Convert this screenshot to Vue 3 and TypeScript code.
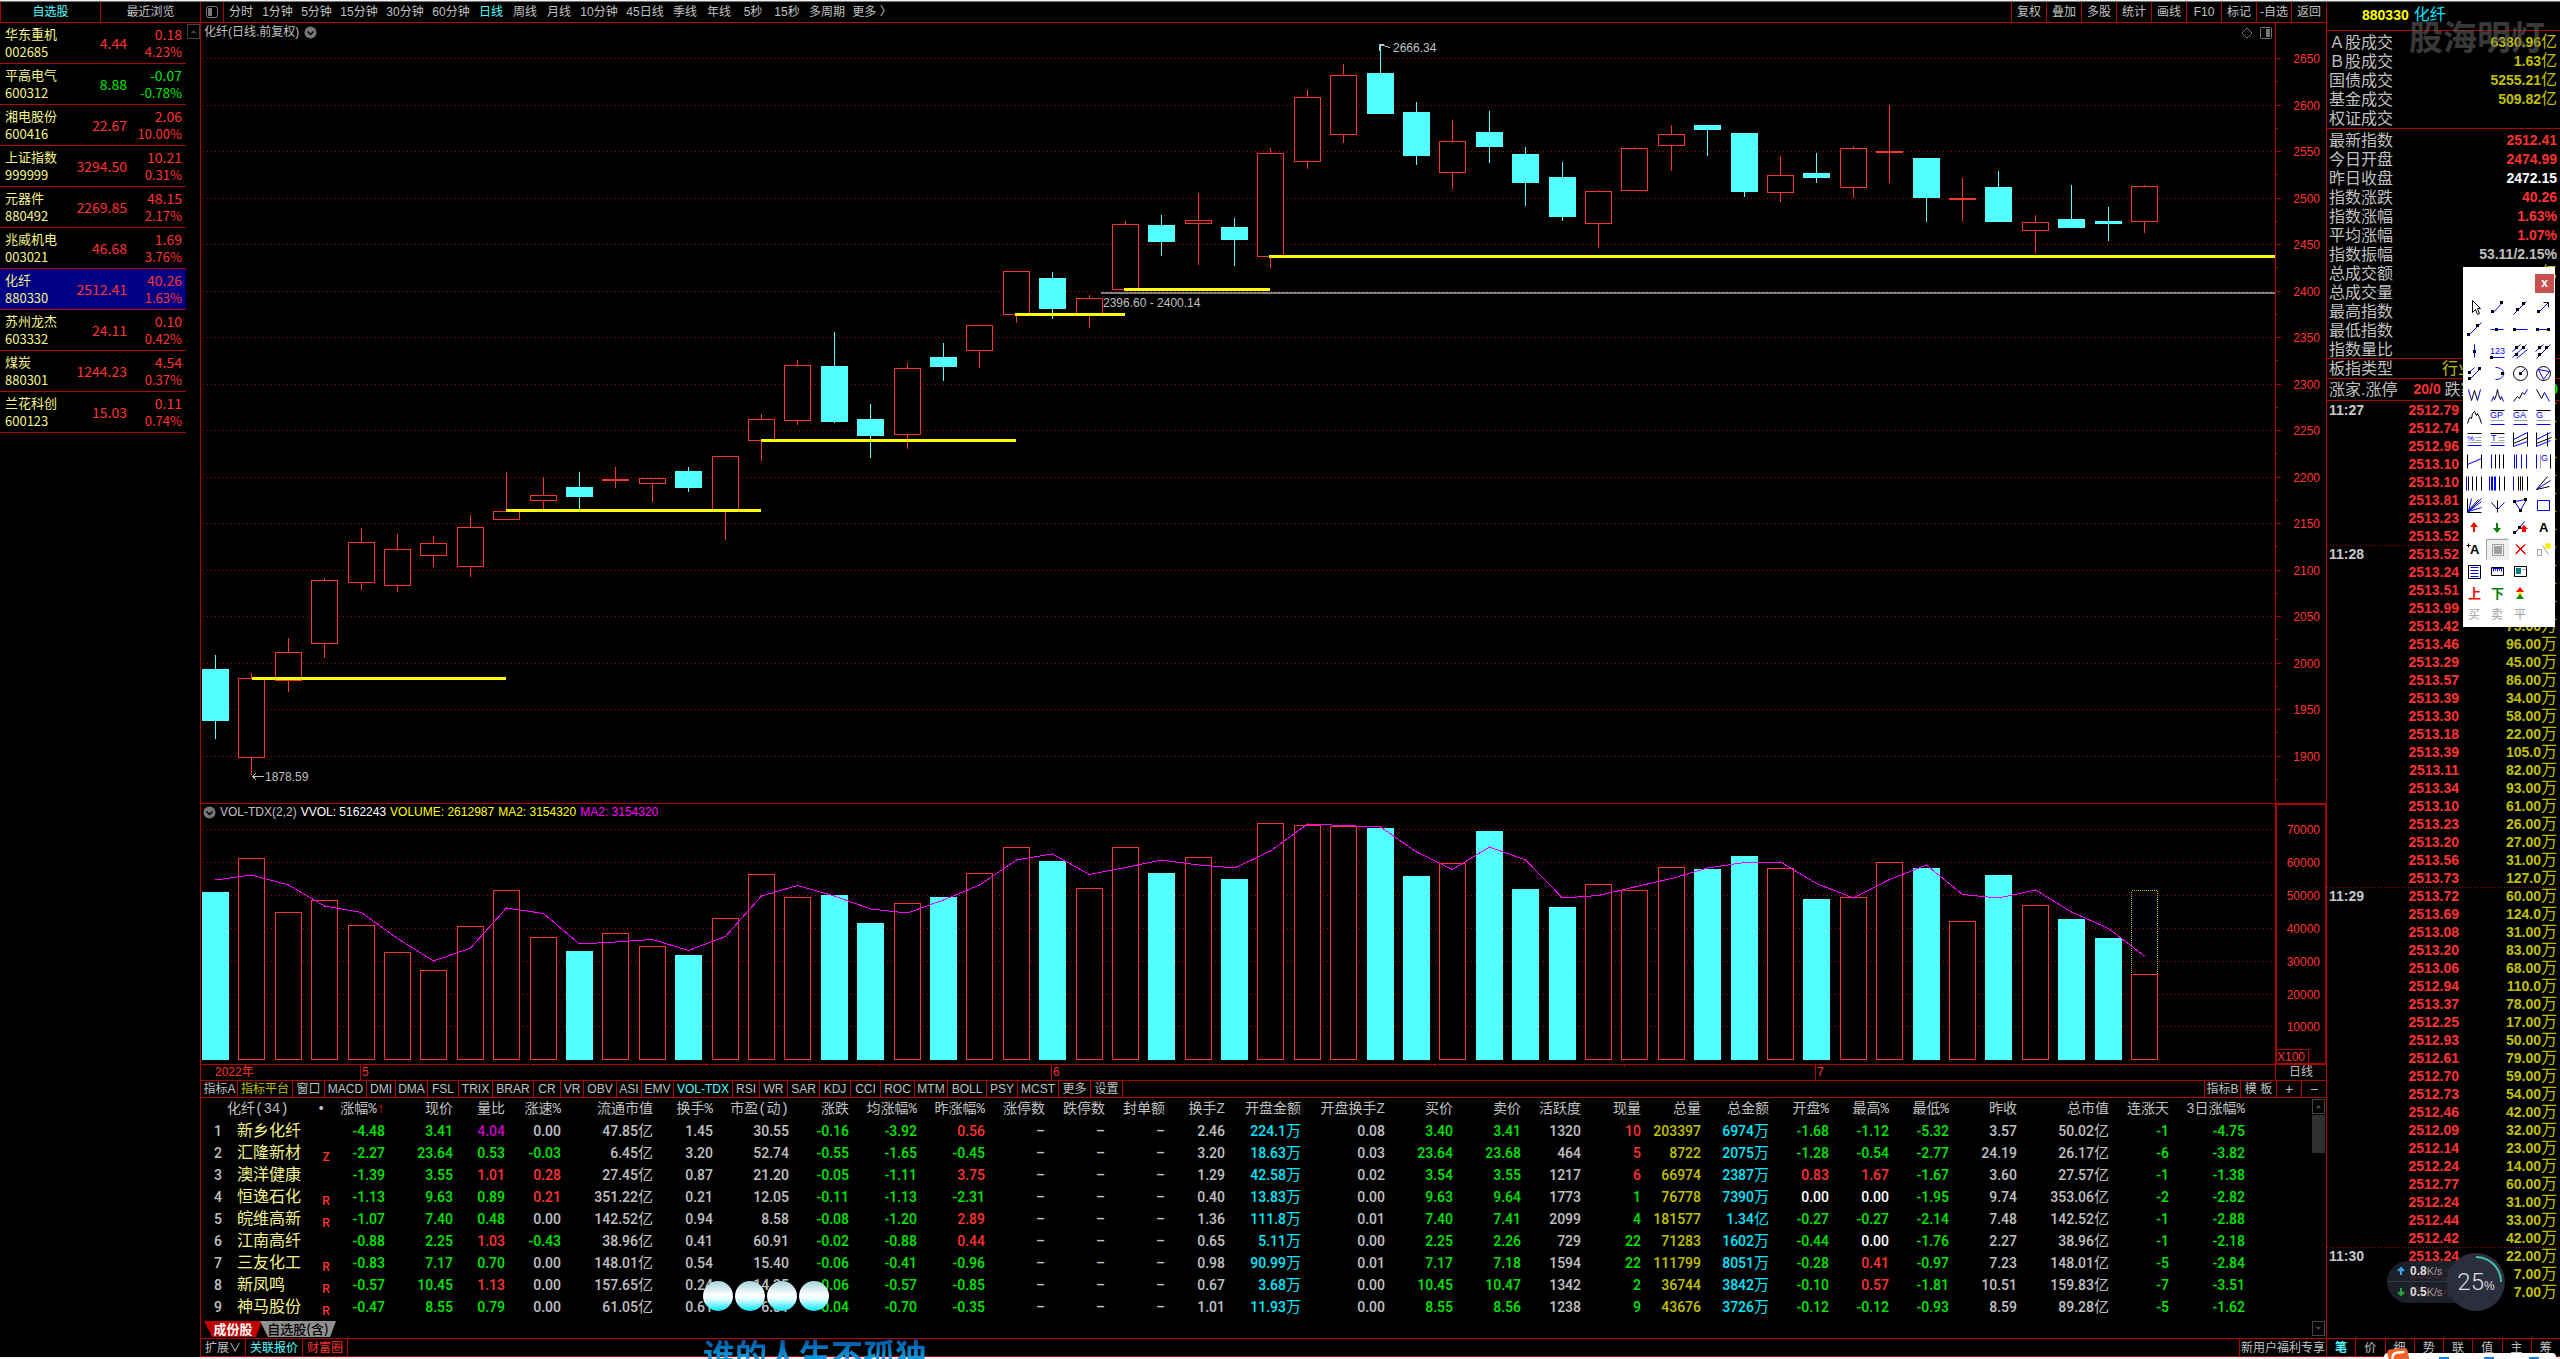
<script setup lang="ts">
type Watch = [name: string, code: string, price: string, diff: string, pct: string]
const watchlist: Watch[] = [
  ['华东重机', '002685', '4.44', '0.18', '4.23%'],
  ['平高电气', '600312', '8.88', '-0.07', '-0.78%'],
  ['湘电股份', '600416', '22.67', '2.06', '10.00%'],
  ['上证指数', '999999', '3294.50', '10.21', '0.31%'],
  ['元器件', '880492', '2269.85', '48.15', '2.17%'],
  ['兆威机电', '003021', '46.68', '1.69', '3.76%'],
  ['化纤', '880330', '2512.41', '40.26', '1.63%'],
  ['苏州龙杰', '603332', '24.11', '0.10', '0.42%'],
  ['煤炭', '880301', '1244.23', '4.54', '0.37%'],
  ['兰花科创', '600123', '15.03', '0.11', '0.74%'],
]

const periods: [string, number][] = [
  ['分时', 34], ['1分钟', 39], ['5分钟', 39], ['15分钟', 46], ['30分钟', 46], ['60分钟', 46],
  ['日线', 34], ['周线', 34], ['月线', 34], ['10分钟', 46], ['45日线', 46], ['季线', 34],
  ['年线', 34], ['5秒', 34], ['15秒', 34], ['多周期', 46], ['更多 〉', 44],
]
const actions = ['复权', '叠加', '多股', '统计', '画线', 'F10', '标记', '-自选', '返回']

const indicators: [string, number][] = [
  ['指标A', 36], ['指标平台', 55], ['窗口', 32], ['MACD', 42], ['DMI', 29], ['DMA', 32], ['FSL', 31],
  ['TRIX', 34], ['BRAR', 41], ['CR', 27], ['VR', 23], ['OBV', 33], ['ASI', 25], ['EMV', 32],
  ['VOL-TDX', 59], ['RSI', 27], ['WR', 28], ['SAR', 32], ['KDJ', 31], ['CCI', 30], ['ROC', 34],
  ['MTM', 33], ['BOLL', 39], ['PSY', 31], ['MCST', 41], ['更多', 32], ['设置', 32],
]

// Each candle: falling flag, body top, body bottom, high, low, volume top
type Candle = [number, number, number, number, number, number]
const candles: Candle[] = [
  [1, 669, 721, 655, 739, 892], [0, 678, 757, 673, 775, 858], [0, 652, 680, 638, 692, 912],
  [0, 580, 643, 578, 658, 900], [0, 542, 582, 528, 590, 925], [0, 549, 585, 534, 592, 952],
  [0, 543, 555, 536, 567, 970], [0, 527, 566, 515, 577, 926], [0, 511, 519, 472, 519, 890],
  [0, 495, 500, 477, 509, 937], [1, 487, 497, 472, 509, 951], [0, 479, 480, 467, 488, 933],
  [0, 478, 483, 478, 502, 946], [1, 471, 488, 467, 492, 955], [0, 456, 510, 456, 540, 918],
  [0, 419, 440, 414, 461, 874], [0, 365, 420, 360, 425, 897], [1, 366, 422, 332, 423, 895],
  [1, 419, 436, 404, 458, 923], [0, 368, 434, 363, 449, 903], [1, 357, 367, 343, 381, 897],
  [0, 325, 350, 325, 368, 873], [0, 271, 314, 271, 323, 847], [1, 278, 309, 272, 319, 861],
  [0, 298, 314, 295, 328, 888], [0, 224, 289, 221, 289, 847], [1, 225, 242, 215, 256, 873],
  [0, 220, 223, 193, 265, 857], [1, 227, 240, 218, 266, 879], [0, 153, 256, 148, 268, 823],
  [0, 97, 161, 90, 169, 825], [0, 75, 134, 64, 143, 826], [1, 73, 114, 44, 114, 828],
  [1, 112, 156, 102, 165, 876], [0, 141, 172, 120, 189, 863], [1, 132, 147, 111, 163, 831],
  [1, 154, 183, 147, 206, 889], [1, 177, 217, 162, 221, 907], [0, 191, 223, 190, 248, 884],
  [0, 148, 190, 147, 190, 890], [0, 134, 145, 125, 171, 867], [1, 125, 130, 125, 156, 869],
  [1, 133, 192, 133, 197, 856], [0, 175, 192, 156, 202, 868], [1, 173, 178, 153, 183, 899],
  [0, 148, 187, 146, 198, 897], [0, 151, 152, 105, 183, 862], [1, 158, 198, 158, 222, 868],
  [0, 198, 199, 178, 221, 921], [1, 187, 222, 171, 222, 875], [0, 222, 230, 215, 253, 905],
  [1, 219, 228, 185, 228, 919], [1, 221, 224, 207, 241, 938], [0, 186, 221, 185, 233, 974],
]
const cx = (i: number) => Math.round(215 + i * 36.396)
const X0 = 201
const PLOT_W = 2074
const leftPct = (x: number) => ({ left: ((x - X0) / PLOT_W) * 100 + '%' })
const VOL_BASE = 1060
const maPoints = candles
  .map((c, i) => {
    const prev = i ? candles[i - 1][5] : 868
    return `${cx(i) + 0.5},${(c[5] + prev) / 2}`
  })
  .join(' ')

const priceTicks = Array.from({ length: 16 }, (_, i) => ({ v: 2650 - i * 50, y: Math.round(58 + i * 46.5) }))
const volTicks = Array.from({ length: 7 }, (_, i) => ({ v: 70000 - i * 10000, y: Math.round(829 + i * 32.9) }))
const supports = [
  [252, 506, 678], [506, 761, 510], [761, 1016, 440], [1015, 1125, 314], [1124, 1270, 289], [1269, 2275, 256],
]
const months: [string, number][] = [['5', 360], ['6', 1051], ['7', 1815]]
const weekTicks = [533, 706, 878, 1242, 1434, 1624]

type Kind = 'idx' | 'down' | 'ratio' | 'speed' | 'plain' | 'sign' | 'amt' | 'vol' | 'lot'
const columns: { t: string; w: number; k: Kind }[] = [
  { t: '现价', w: 68, k: 'down' }, { t: '量比', w: 52, k: 'ratio' }, { t: '涨速%', w: 56, k: 'speed' },
  { t: '流通市值', w: 92, k: 'plain' }, { t: '换手%', w: 60, k: 'plain' }, { t: '市盈(动)', w: 76, k: 'plain' },
  { t: '涨跌', w: 60, k: 'sign' }, { t: '均涨幅%', w: 68, k: 'sign' }, { t: '昨涨幅%', w: 68, k: 'sign' },
  { t: '涨停数', w: 60, k: 'plain' }, { t: '跌停数', w: 60, k: 'plain' }, { t: '封单额', w: 60, k: 'plain' },
  { t: '换手Z', w: 60, k: 'plain' }, { t: '开盘金额', w: 76, k: 'amt' }, { t: '开盘换手Z', w: 84, k: 'plain' },
  { t: '买价', w: 68, k: 'down' }, { t: '卖价', w: 68, k: 'down' }, { t: '活跃度', w: 60, k: 'plain' },
  { t: '现量', w: 60, k: 'lot' }, { t: '总量', w: 60, k: 'vol' }, { t: '总金额', w: 68, k: 'amt' },
  { t: '开盘%', w: 60, k: 'sign' }, { t: '最高%', w: 60, k: 'sign' }, { t: '最低%', w: 60, k: 'sign' },
  { t: '昨收', w: 68, k: 'plain' }, { t: '总市值', w: 92, k: 'plain' }, { t: '连涨天', w: 60, k: 'sign' },
  { t: '3日涨幅%', w: 76, k: 'sign' },
]
const stocks: [string, string, string, string][] = [
  ['新乡化纤', '', '-4.48', '3.41 4.04 0.00 47.85亿 1.45 30.55 -0.16 -3.92 0.56 – – – 2.46 224.1万 0.08 3.40 3.41 1320 10 203397 6974万 -1.68 -1.12 -5.32 3.57 50.02亿 -1 -4.75'],
  ['汇隆新材', 'Z', '-2.27', '23.64 0.53 -0.03 6.45亿 3.20 52.74 -0.55 -1.65 -0.45 – – – 3.20 18.63万 0.03 23.64 23.68 464 5 8722 2075万 -1.28 -0.54 -2.77 24.19 26.17亿 -6 -3.82'],
  ['澳洋健康', '', '-1.39', '3.55 1.01 0.28 27.45亿 0.87 21.20 -0.05 -1.11 3.75 – – – 1.29 42.58万 0.02 3.54 3.55 1217 6 66974 2387万 0.83 1.67 -1.67 3.60 27.57亿 -1 -1.38'],
  ['恒逸石化', 'R', '-1.13', '9.63 0.89 0.21 351.22亿 0.21 12.05 -0.11 -1.13 -2.31 – – – 0.40 13.83万 0.00 9.63 9.64 1773 1 76778 7390万 0.00 0.00 -1.95 9.74 353.06亿 -2 -2.82'],
  ['皖维高新', 'R', '-1.07', '7.40 0.48 0.00 142.52亿 0.94 8.58 -0.08 -1.20 2.89 – – – 1.36 111.8万 0.01 7.40 7.41 2099 4 181577 1.34亿 -0.27 -0.27 -2.14 7.48 142.52亿 -1 -2.88'],
  ['江南高纤', '', '-0.88', '2.25 1.03 -0.43 38.96亿 0.41 60.91 -0.02 -0.88 0.44 – – – 0.65 5.11万 0.00 2.25 2.26 729 22 71283 1602万 -0.44 0.00 -1.76 2.27 38.96亿 -1 -2.18'],
  ['三友化工', 'R', '-0.83', '7.17 0.70 0.00 148.01亿 0.54 15.40 -0.06 -0.41 -0.96 – – – 0.98 90.99万 0.01 7.17 7.18 1594 22 111799 8051万 -0.28 0.41 -0.97 7.23 148.01亿 -5 -2.84'],
  ['新凤鸣', 'R', '-0.57', '10.45 1.13 0.00 157.65亿 0.24 14.35 -0.06 -0.57 -0.85 – – – 0.67 3.68万 0.00 10.45 10.47 1342 2 36744 3842万 -0.10 0.57 -1.81 10.51 159.83亿 -7 -3.51'],
  ['神马股份', 'R', '-0.47', '8.55 0.79 0.00 61.05亿 0.61 6.81 -0.04 -0.70 -0.35 – – – 1.01 11.93万 0.00 8.55 8.56 1238 9 43676 3726万 -0.12 -0.12 -0.93 8.59 89.28亿 -5 -1.62'],
]
function tone(k: Kind, s: string, row: number): string {
  const n = parseFloat(s)
  if (k === 'down') return 'green'
  if (k === 'ratio') return n > 3 ? 'purple' : n > 1 ? 'red' : 'green'
  if (k === 'speed') return n > 0 ? 'red' : n < 0 ? 'green' : ''
  if (k === 'sign') return n > 0 ? 'red' : n < 0 ? 'green' : 'white'
  if (k === 'amt') return 'aqua'
  if (k === 'vol') return 'olive'
  if (k === 'lot') return row < 3 ? 'red' : 'green'
  return ''
}
const num = (s: string) => s.replace(/[亿万]/, '')
const unit = (s: string) => (/[亿万]/.exec(s) || [''])[0]

const turnover: [string, string][] = [
  ['Ａ股成交', '6380.96亿'], ['Ｂ股成交', '1.63亿'], ['国债成交', '5255.21亿'], ['基金成交', '509.82亿'], ['权证成交', ''],
]
const quote: [string, string, string][] = [
  ['最新指数', '2512.41', 'red'], ['今日开盘', '2474.99', 'red'], ['昨日收盘', '2472.15', 'white'],
  ['指数涨跌', '40.26', 'red'], ['指数涨幅', '1.63%', 'red'], ['平均涨幅', '1.07%', 'red'],
  ['指数振幅', '53.11/2.15%', ''], ['总成交额', '亿', 'olive'], ['总成交量', '', ''],
  ['最高指数', '', 'red'], ['最低指数', '', 'green'], ['指数量比', '', 'red'],
]
const ticks: { time: string; rows: string[] }[] = [
  { time: '11:27', rows: '2512.79 2512.74 2512.96 2513.10 2513.10 2513.81 2513.23 2513.52'.split(' ').map((p) => p + ' 万') },
  {
    time: '11:28',
    rows: ['2513.52 万', '2513.24 万', '2513.51 万', '2513.99 万', '2513.42 75.00万', '2513.46 96.00万', '2513.29 45.00万',
      '2513.57 86.00万', '2513.39 34.00万', '2513.30 58.00万', '2513.18 22.00万', '2513.39 105.0万', '2513.11 82.00万',
      '2513.34 93.00万', '2513.10 61.00万', '2513.23 26.00万', '2513.20 27.00万', '2513.56 31.00万', '2513.73 127.0万'],
  },
  {
    time: '11:29',
    rows: ['2513.72 60.00万', '2513.69 124.0万', '2513.08 31.00万', '2513.20 83.00万', '2513.06 68.00万', '2512.94 110.0万',
      '2513.37 78.00万', '2512.25 17.00万', '2512.93 50.00万', '2512.61 79.00万', '2512.70 59.00万', '2512.73 54.00万',
      '2512.46 42.00万', '2512.09 32.00万', '2512.14 23.00万', '2512.24 14.00万', '2512.77 60.00万', '2512.24 31.00万',
      '2512.44 33.00万', '2512.42 42.00万'],
  },
  { time: '11:30', rows: ['2513.24 22.00万', '2513.11 7.00万', '2513.41 7.00万'] },
]
const sideTabs = ['笔', '价', '细', '势', '联', '值', '主', '筹']

// Drawing tools: strokes are [colour, path], fills are [colour, path, 1], text is [colour, string, 2, x, y, size]
type Shape = [string, string, number?, number?, number?, number?]
const B = '#0000ff'
const K = '#000000'
const G = '#a0a0a0'
const R = '#ff0000'
const D = '#008000'
const dot = (...p: number[]): Shape => {
  let d = ''
  for (let i = 0; i < p.length; i += 2) d += `M${p[i] - 1} ${p[i + 1] - 1}h3v3h-3z`
  return [K, d, 1]
}
const verts = (...x: number[]) => x.map((v) => `M${v} -7V7`).join('')
const tools: { n: string; s: Shape[] }[] = [
  { n: '选择', s: [[K, 'M-2 -7V5L1 2L3 7L5 6L3 1H6Z']] },
  { n: '线段', s: [[B, 'M-4 5L5 -5'], dot(-5, 4, 4, -5)] },
  { n: '直线', s: [[B, 'M-7 7L6 -6'], dot(-3, 2, 3, -4)] },
  { n: '箭头', s: [[B, 'M-5 5L5 -5'], [K, 'M0 -5H5V0'], dot(-5, 4)] },
  { n: '射线', s: [[B, 'M-6 6L7 -7'], dot(-6, 5, 3, -4)] },
  { n: '水平直线', s: [[B, 'M-7 0H6'], dot(-1, 0)] },
  { n: '水平射线', s: [[B, 'M-6 0H7'], dot(-6, 0)] },
  { n: '水平线段', s: [[B, 'M-7 0H6'], dot(-6, 0, 5, 0)] },
  { n: '垂直线', s: [[B, 'M0 -7V6'], dot(0, 0)] },
  { n: '价格', s: [[B, 'M-7 6H7'], [B, '123', 2, -7, 3, 9], dot(-6, 6)] },
  { n: '平行线', s: [[B, 'M-8 0L0 -7M-8 6L6 -7M-4 7L7 -2'], dot(-4, -4, -4, 3, 3, -4)] },
  { n: '平行射线', s: [[B, 'M-8 0L0 -7M-7 7L7 -7'], dot(-4, -4, -4, 3, 3, -4)] },
  { n: '平行线段', s: [[B, 'M-5 -1L0 -6M-5 6L6 -5'], dot(-5, -1, 5, -5, -5, 5)] },
  { n: '圆弧', s: [[B, 'M-2 -6C9 -6 9 6 -2 6'], dot(5, 0)] },
  { n: '圆', s: [[K, 'M-7 0A7 7 0 1 1 7 0A7 7 0 1 1 -7 0'], [B, 'M0 0L5 -5'], dot(0, 0)] },
  { n: '外接圆', s: [[K, 'M-7 0A7 7 0 1 1 7 0A7 7 0 1 1 -7 0'], [B, 'M-5 -4L6 -2L0 6Z']] },
  { n: '五浪', s: [[B, 'M-6 -6L-3 5M6 -6L3 5'], [K, 'M-3 5L0 -5L3 5']] },
  { n: '头肩', s: [[B, 'M-6 6L-4 1L-3 4M3 4L4 1L6 6'], [K, 'M-3 4L-1 -1L0 -6L1 -1L3 4']] },
  { n: '上升波', s: [[K, 'M-7 6L-3 1L-1 3L2 -3'], [B, 'M2 -3L4 -1L7 -6']] },
  { n: '下降波', s: [[K, 'M-7 -6L-2 3L1 -3'], [B, 'M1 -3L6 6']] },
  { n: '八浪', s: [[K, 'M-7 6L-5 0L-3 1L-2 -4L0 -6L2 -2L3 -4L5 0L7 6']] },
  { n: '黄金价位', s: [[K, 'M-7 -7H7'], [B, 'GP', 2, -7, 1, 9], [G, 'M-7 3H7'], [B, 'M-7 7H7']] },
  { n: '黄金目标', s: [[K, 'M-7 -7H7'], [B, 'GA', 2, -7, 1, 9], [G, 'M-7 3H7'], [B, 'M-7 7H7']] },
  { n: '黄金分割', s: [[K, 'M-7 -7H7'], [B, 'G', 2, -7, 1, 9], [G, 'M-7 3H7'], [B, 'M-7 7H7']] },
  { n: '百分比', s: [[K, 'M-7 -6H7'], [B, '%', 2, -7, 2, 8], [G, 'M1 -2H7M1 1H7M-7 3H7'], [B, 'M-7 6H7']] },
  { n: '波段线', s: [[K, 'M-7 -6H7'], [B, 'T', 2, -6, 2, 9], [G, 'M1 -2H7M1 1H7M-7 3H7'], [B, 'M-7 6H7']] },
  { n: '回归带', s: [[K, 'M-7 -7V7M7 -7V7M-7 4L7 -2'], [B, 'M-7 0L7 -7M-7 7L7 2']] },
  { n: '延长回归', s: [[K, 'M-7 -7V7M4 -7V7M-7 4L8 -2'], [B, 'M-7 0L7 -7M-7 7L7 1']] },
  { n: '回归线', s: [[K, 'M-7 -7V7M7 -7V7'], [B, 'M-7 3L7 -3']] },
  { n: '周期线', s: [[B, verts(-6)], [K, verts(-2, 2, 6)]] },
  { n: '等距线', s: [[B, verts(-6, -4, 1, 6)]] },
  { n: '黄金周期', s: [[B, verts(-7)], [G, verts(-3)], [K, verts(7)], [B, 'G', 2, -2, 0, 9]] },
  { n: '费氏线', s: [[B, verts(-8)], [K, verts(-6, -2, 2, 7)]] },
  { n: '阴阳线', s: [[B, verts(-8, -6, -5, -3, -2)], [K, verts(2, 7)]] },
  { n: '等差线', s: [[B, verts(-7)], [K, verts(-2, 0, 2, 7)]] },
  { n: '阻速线', s: [[K, 'M-7 6L4 -7M-7 6L6 3'], [B, 'M-7 6L7 -3']] },
  { n: '甘氏线', s: [[K, 'M-7 -7V7H7M-7 6L4 -6'], [B, 'M-6 6L-3 -7M-6 6L7 -4M-6 6L7 2M-6 6L7 -7']] },
  { n: '扇形线', s: [[K, 'M-6 -3L0 4V-5M0 4V7'], [B, 'M0 4L7 -3']] },
  { n: '三角形', s: [[B, 'M-6 -4L6 -6L0 5Z'], dot(-6, -4, 5, -6, 0, 5)] },
  { n: '矩形', s: [[B, 'M-6 -5H6V5H-6Z']] },
  { n: '上涨标记', s: [[R, 'M-1 5V0H-4L0 -5L4 0H1V5Z', 1]] },
  { n: '下跌标记', s: [[D, 'M-1 -4V1H-4L0 6L4 1H1V-4Z', 1]] },
  { n: '趋势箭头', s: [[B, 'M-6 6L4 -6'], dot(-6, 5, -1, 0), [R, 'M2 5V2H0L4 -2L8 2H6V5Z', 1]] },
  { n: '文字', s: [[K, 'A', 3, -4, 5, 13]] },
  { n: '文字标注', s: [[K, 'A', 3, -4, 5, 13], [K, 'M-6 -6V-2M-8 -4H-4']] },
  { n: '图形块', s: [[G, 'M-11 10V-10H10'], [G, 'M-5 -5H6V6H-5Z'], [G, 'M-3 -3H5V5H-3Z', 1]] },
  { n: '删除', s: [[R, 'M-5 -5L5 5M5 -5L-5 5'], [R, 'M-4 -5L5 4M4 -5L-5 4']] },
  { n: '隐藏', s: [[G, 'M-6 0H-2V6H-6ZM-1 -4L5 5'], ['#ffee00', 'M2 -3A3 3 0 1 1 8 -3A3 3 0 1 1 2 -3', 1]] },
  { n: '列表', s: [[K, 'M-6 -6H6V7H-6Z'], [B, 'M-4 -4H4M-4 -1H4M-4 2H4M-4 5H4']] },
  { n: '标尺', s: [[K, 'M-6 -4H6V4H-6Z'], [B, 'M-5 -3H5M-4 -3V0M-2 -3V-1M0 -3V0M2 -3V-1M4 -3V0']] },
  { n: '截图', s: [[K, 'M-6 -5H6V5H-6Z'], ['#008080', 'M-4 -3H1V3H-4Z', 1], [G, 'M2 -2H5']] },
  { n: '', s: [] },
  { n: '上', s: [[R, '上', 3, -6, 5, 13]] },
  { n: '下', s: [[D, '下', 3, -6, 5, 13]] },
  { n: '仓位', s: [[R, 'M0 -6L4 -1H-4Z', 1], ['#ffee00', 'M0 -2L3 2H-3Z', 1], [D, 'M0 1L4 6H-4Z', 1]] },
  { n: '', s: [] },
  { n: '买', s: [[G, '买', 2, -6, 4, 12]] },
  { n: '卖', s: [[G, '卖', 2, -6, 4, 12]] },
  { n: '平', s: [[G, '平', 2, -6, 4, 12]] },
]
</script>

<template>
  <div class="screen">
    <div class="edge-top"></div>
    <div class="main">
      <aside class="left">
        <div class="left-tabs">
          <button class="ltab on">自选股</button>
          <button class="ltab">最近浏览</button>
        </div>
        <div class="left-body">
          <ul class="watch">
            <li v-for="w in watchlist" :key="w[1]" :class="{ sel: w[1] === '880330' }">
              <div class="w-name"><span>{{ w[0] }}</span><span class="w-code">{{ w[1] }}</span></div>
              <div class="w-price" :class="w[3].startsWith('-') ? 'green' : 'red'">{{ w[2] }}</div>
              <div class="w-chg" :class="w[3].startsWith('-') ? 'green' : 'red'">
                <span>{{ w[3] }}</span><span class="w-pct">{{ w[4] }}</span>
              </div>
            </li>
          </ul>
          <button class="arrow-btn" aria-label="向上"><svg viewBox="0 0 12 14"><path d="M3 9L6 5L9 9Z" /></svg></button>
        </div>
      </aside>

      <section class="center">
        <nav class="toolbar">
          <button class="panel-btn" aria-label="面板">
            <svg width="12" height="12" viewBox="0 0 12 12"><rect x="0.5" y="0.5" width="11" height="11" rx="2" fill="none" stroke="#777" /><rect x="2" y="2" width="4" height="8" fill="#777" /></svg>
          </button>
          <button v-for="p in periods" :key="p[0]" class="period" :class="{ on: p[0] === '日线' }" :style="{ width: p[1] + 'px' }">{{ p[0] }}</button>
          <span class="grow"></span>
          <button v-for="a in actions" :key="a" class="action">{{ a }}</button>
        </nav>

        <div class="pane price">
          <div class="plot">
            <svg class="plot-svg" viewBox="201 23 2074 780" preserveAspectRatio="none" shape-rendering="crispEdges">
              <line v-for="t in priceTicks" :key="t.v" class="grid" x1="203" x2="2275" :y1="t.y + 0.5" :y2="t.y + 0.5" />
              <g v-for="(c, i) in candles" :key="i" :class="c[0] ? 'fall' : 'rise'">
                <line :x1="cx(i) + 0.5" :x2="cx(i) + 0.5" :y1="c[3]" :y2="c[1]" />
                <line :x1="cx(i) + 0.5" :x2="cx(i) + 0.5" :y1="c[2]" :y2="c[4]" />
                <rect v-if="c[0]" :x="cx(i) - 13" :y="c[1]" width="27" :height="c[2] - c[1]" />
                <rect v-else :x="cx(i) - 12.5" :y="c[1] + 0.5" width="26" :height="c[2] - c[1]" />
              </g>
              <line x1="1101" x2="2275" y1="293" y2="293" stroke="#808080" stroke-width="2" />
              <line v-for="s in supports" :key="s[2]" :x1="s[0]" :x2="s[1]" :y1="s[2] + 0.5" :y2="s[2] + 0.5" stroke="#ffff00" stroke-width="3" />
              <path d="M1379.500 51V44.500L1390 47.500M1379 44.500H1384" fill="none" stroke="#c0c0c0" />
              <path d="M253 776.500H264M256 773L253 776.500L256 780" fill="none" stroke="#c0c0c0" />
            </svg>
            <div class="plot-title">化纤(日线.前复权)
              <svg width="13" height="13" viewBox="0 0 13 13"><circle cx="6.500" cy="6.500" r="6" fill="#777" /><path d="M3.500 5.500L6.500 8.500L9.500 5.500" fill="none" stroke="#000" stroke-width="1.500" /></svg>
            </div>
            <span class="mark high" :style="leftPct(1393)">2666.34</span>
            <span class="mark gap-mark" :style="leftPct(1103)">2396.60 - 2400.14</span>
            <span class="mark low" :style="leftPct(265)">1878.59</span>
            <div class="plot-tools">
              <svg width="12" height="12" viewBox="0 0 12 12"><path d="M6 1L11 6L6 11L1 6Z" fill="none" stroke="#777" /></svg>
              <svg width="12" height="12" viewBox="0 0 12 12"><rect x="0.500" y="0.500" width="11" height="11" rx="1" fill="none" stroke="#777" /><rect x="6" y="2" width="4" height="8" fill="#777" /></svg>
            </div>
          </div>
          <svg class="axis" width="50" height="780" viewBox="2276 23 50 780">
            <g v-for="t in priceTicks" :key="t.v">
              <path class="tick" shape-rendering="crispEdges" :d="`M2276 ${t.y + 0.5}h5M2276 ${t.y + 23.5}h2`" />
              <text x="2320" :y="t.y + 5" text-anchor="end">{{ t.v }}</text>
            </g>
          </svg>
        </div>

        <div class="pane volume">
          <div class="plot">
            <svg class="plot-svg" viewBox="201 804 2074 260" preserveAspectRatio="none" shape-rendering="crispEdges">
              <line v-for="t in volTicks" :key="t.v" class="grid" x1="203" x2="2275" :y1="t.y + 0.5" :y2="t.y + 0.5" />
              <rect x="2131.500" y="890.500" width="26" height="84" fill="none" stroke="#c0c000" stroke-dasharray="1 1" />
              <g v-for="(c, i) in candles" :key="i" :class="c[0] ? 'fall' : 'rise'">
                <rect v-if="c[0]" :x="cx(i) - 13" :y="c[5]" width="27" :height="VOL_BASE - c[5]" />
                <rect v-else :x="cx(i) - 12.5" :y="c[5] + 0.5" width="26" :height="VOL_BASE - 1 - c[5]" />
              </g>
              <polyline :points="maPoints" fill="none" stroke="#ff00ff" />
            </svg>
            <div class="vol-title">
              <svg width="13" height="13" viewBox="0 0 13 13"><circle cx="6.500" cy="6.500" r="6" fill="#777" /><path d="M3.500 5.500L6.500 8.500L9.500 5.500" fill="none" stroke="#000" stroke-width="1.500" /></svg>
              <span>VOL-TDX(2,2)</span><span class="white">VVOL: 5162243</span><span class="yellow">VOLUME: 2612987</span>
              <span class="yellow">MA2: 3154320</span><span class="magenta">MA2: 3154320</span>
            </div>
          </div>
          <svg class="axis boxed" width="50" height="260" viewBox="2276 804 50 260">
            <text v-for="t in volTicks" :key="t.v" x="2320" :y="t.y + 5" text-anchor="end">{{ t.v }}</text>
            <path class="tick" shape-rendering="crispEdges" d="M2276 1049.500H2308.500V1063" />
            <text x="2305" y="1061" text-anchor="end">X100</text>
          </svg>
        </div>

        <div class="dates">
          <div class="date-track">
            <span class="date" :style="leftPct(215)">2022年</span>
            <span v-for="m in months" :key="m[0]" class="date month" :style="leftPct(m[1])">{{ m[0] }}</span>
            <i v-for="w in weekTicks" :key="w" class="week" :style="leftPct(w)"></i>
          </div>
          <button class="date-unit">日线</button>
        </div>

        <nav class="inds">
          <button v-for="t in indicators" :key="t[0]" class="ind" :class="{ on: t[0] === 'VOL-TDX', gold: t[0] === '指标平台' }" :style="{ width: t[1] + 'px' }">{{ t[0] }}</button>
          <span class="grow"></span>
          <button class="ind edge w36">指标B</button>
          <button class="ind edge w36">模 板</button>
          <button class="ind edge w25 big-sign">+</button>
          <button class="ind edge w25 big-sign">−</button>
        </nav>

        <div class="grid-wrap">
          <table class="stocks">
            <colgroup>
              <col class="c-idx" /><col class="c-name" /><col class="c-flag" /><col class="c-pct" />
              <col v-for="c in columns" :key="c.t" :style="{ width: c.w + 'px' }" />
              <col />
            </colgroup>
            <thead>
              <tr>
                <th colspan="2" class="th-name">化纤(34)</th>
                <th class="th-dot">•</th>
                <th>涨幅%<span class="sort">↑</span></th>
                <th v-for="c in columns" :key="c.t">{{ c.t }}</th>
                <th></th>
              </tr>
            </thead>
            <tbody>
              <tr v-for="(s, r) in stocks" :key="s[0]">
                <td class="idx">{{ r + 1 }}</td>
                <td class="name">{{ s[0] }}</td>
                <td class="flag">{{ s[1] }}</td>
                <td class="green">{{ s[2] }}</td>
                <td v-for="(v, k) in s[3].split(' ')" :key="k" :class="tone(columns[k].k, v, r)">{{ num(v) }}<span v-if="unit(v)" class="unit">{{ unit(v) }}</span></td>
                <td></td>
              </tr>
            </tbody>
          </table>
          <div class="scroll">
            <button class="arrow-btn" aria-label="上翻"><svg viewBox="0 0 12 14"><path d="M3 9L6 5L9 9Z" /></svg></button>
            <div class="thumb"></div>
            <span class="grow"></span>
            <button class="arrow-btn" aria-label="下翻"><svg viewBox="0 0 12 14"><path d="M3 5L6 9L9 5Z" /></svg></button>
          </div>
          <div class="sheet-tabs">
            <button class="sheet on">成份股</button>
            <button class="sheet">自选股(含)</button>
          </div>
        </div>

        <footer class="foot">
          <button class="fcell">扩展∨</button>
          <button class="fcell cyan">关联报价</button>
          <button class="fcell red">财富圈</button>
          <span class="grow"></span>
          <a class="fcell promo" href="#">新用户福利专享</a>
        </footer>
      </section>

      <aside class="right">
        <header class="r-title"><b>880330</b><span>化纤</span></header>
        <dl class="rows five">
          <div v-for="t in turnover" :key="t[0]"><dt>{{ t[0] }}</dt><dd class="olive">{{ num(t[1]) }}<span class="unit">{{ unit(t[1]) }}</span></dd></div>
        </dl>
        <dl class="rows">
          <div v-for="q in quote" :key="q[0]"><dt>{{ q[0] }}</dt><dd :class="q[2]">{{ num(q[1]) }}<span class="unit">{{ unit(q[1]) }}</span></dd></div>
        </dl>
        <div class="r-line"><span>板指类型</span><span class="kind olive">行业板块</span></div>
        <div class="r-line tall"><span>涨家.涨停</span><b class="upcount red">20/0</b><span class="fallcount">跌家</span><b class="zero green">0</b></div>
        <div class="tick-list">
          <div v-for="g in ticks" :key="g.time" class="tick-group">
            <div v-for="(row, i) in g.rows" :key="i" class="tick-row">
              <span class="t-time">{{ i ? '' : g.time }}</span>
              <span class="t-price red">{{ row.split(' ')[0] }}</span>
              <span class="t-amt olive">{{ num(row.split(' ')[1]) }}<span class="unit">{{ unit(row.split(' ')[1]) }}</span></span>
            </div>
          </div>
        </div>
        <nav class="r-tabs">
          <button v-for="(t, i) in sideTabs" :key="t" :class="{ on: i === 0 }">{{ t }}</button>
        </nav>
      </aside>
    </div>
    <div class="edge-bottom"></div>

    <div class="watermark">股海明灯</div>

    <div class="palette">
      <button class="close" aria-label="关闭">x</button>
      <div class="tool-grid">
        <button v-for="(t, i) in tools" :key="i" class="tool" :class="{ pressed: t.n === '图形块' }" :aria-label="t.n || '空'">
          <svg width="22" height="22" viewBox="-11 -11 22 22">
            <template v-for="(s, k) in t.s" :key="k">
              <text v-if="s[2] === 2 || s[2] === 3" :x="s[3]" :y="s[4]" :font-size="s[5]" :font-weight="s[2] === 3 ? 700 : 400" :fill="s[0]">{{ s[1] }}</text>
              <path v-else-if="s[2] === 1" :d="s[1]" :fill="s[0]" />
              <path v-else :d="s[1]" fill="none" :stroke="s[0]" transform="translate(0.500 0.500)" />
            </template>
          </svg>
        </button>
      </div>
    </div>

    <div class="gauge">
      <div class="rates">
        <div class="rate"><svg width="8" height="8" viewBox="0 0 8 8"><path d="M4 8V1M1 4L4 1L7 4" fill="none" stroke="#35a7e8" stroke-width="2" /></svg><b>0.8</b>K/s</div>
        <div class="rate"><svg width="8" height="8" viewBox="0 0 8 8"><path d="M4 0V7M1 4L4 7L7 4" fill="none" stroke="#1fa83c" stroke-width="2" /></svg><b>0.5</b>K/s</div>
      </div>
      <div class="dial">
        <svg width="58" height="58" viewBox="0 0 58 58"><path d="M29 4A25 25 0 0 1 54 29" fill="none" stroke="#41c3a9" stroke-width="2" /></svg>
        <span class="big">25</span><span class="small">%</span>
      </div>
    </div>

    <div class="beads"><i v-for="n in 4" :key="n"></i></div>
    <div class="lyric">谁的人生不孤独</div>

    <div class="ime">
      <svg width="34" height="14" viewBox="0 0 34 14"><path d="M2 6Q2 3 5 2L24 0Q27 0 28 3L30 14H4Z" fill="#f2632c" /><path d="M9 14Q8 7 14 6L24 5" fill="none" stroke="#fff" stroke-width="3" /></svg>
      <div class="ime-bar"><i></i><i></i><i></i></div>
    </div>
  </div>
</template>

<style>
html,
body {
  background: #000;
}
</style>

<style scoped>
.screen {
  position: relative;
  overflow: hidden;
  min-width: 1200px;
  background: #000;
  color: #c0c0c0;
  font: 12px/16px "Liberation Sans", "Noto Sans CJK SC", sans-serif;
}
button {
  margin: 0;
  padding: 0;
  border: 0;
  background: none;
  color: inherit;
  font: inherit;
  white-space: nowrap;
}
.grow { flex: 1; }
.red { color: #ff3232; }
.green { color: #00e600; }
.white { color: #fff; }
.yellow { color: #ffff00; }
.magenta { color: #ff00ff; }
.purple { color: #c800c8; }
.olive { color: #c0c000; }
.aqua { color: #00e6ff; }
.cyan { color: #54ffff; }
.edge-top { height: 2px; box-sizing: border-box; background: #eee; border-bottom: 1px solid #777; }
.edge-bottom { height: 2px; background: #f4f4f4; }
.main { display: flex; align-items: stretch; }

.left { flex: none; width: 200px; border-right: 1px solid #b00000; }
.left-tabs { display: flex; height: 20px; border-bottom: 1px solid #b00000; }
.ltab { flex: 1; border-left: 1px solid #b00000; line-height: 20px; }
.ltab.on { color: #54ffff; }
.left-body { display: flex; justify-content: space-between; }
.watch { width: 186px; margin: 0; padding: 0; list-style: none; font-family: "Noto Sans CJK SC", sans-serif; }
.watch li { display: flex; height: 40px; border-bottom: 1px solid #b00000; align-items: center; }
.watch li.sel { background: #000084; }
.w-name { display: flex; flex-direction: column; width: 64px; padding-left: 5px; color: #f4f48a; font-size: 13px; line-height: 18px; }
.w-price { width: 58px; text-align: right; font-size: 14px; }
.w-chg { display: flex; flex: 1; flex-direction: column; padding-right: 4px; text-align: right; font-size: 14px; line-height: 18px; }
.w-pct { font-size: 13px; }
.arrow-btn { flex: none; width: 13px; height: 15px; margin-top: 1px; border: 1px solid #444; display: flex; }
.arrow-btn svg { width: 11px; height: 13px; fill: #444; }

.center { flex: 1; min-width: 0; display: flex; flex-direction: column; }
.toolbar { display: flex; height: 20px; border-bottom: 1px solid #b00000; line-height: 20px; overflow: hidden; }
.panel-btn { width: 23px; border-right: 1px solid #b00000; display: flex; align-items: center; padding-left: 5px; box-sizing: border-box; }
.period.on { color: #54ffff; }
.action { width: 35px; border-left: 1px solid #b00000; }

.pane { display: flex; border-bottom: 1px solid #b00000; }
.plot { position: relative; flex: 1; min-width: 0; }
.price { height: 780px; }
.volume { height: 260px; }
.plot-svg { display: block; width: 100%; height: 100%; }
.grid { stroke: #b00000; stroke-dasharray: 1 3; }
.rise line { stroke: #ff3232; }
.rise rect { stroke: #ff3232; fill: #000; }
.fall line { stroke: #54ffff; }
.fall rect { fill: #54ffff; }
.axis { flex: none; border-left: 1px solid #b00000; fill: #ff3232; font-size: 12px; }
.axis .tick { stroke: #b00000; fill: none; }
.axis.boxed { box-shadow: inset 0 0 0 1px #b00000; }
.plot-title { position: absolute; top: 1px; left: 3px; display: flex; align-items: center; gap: 5px; }
.plot-tools { position: absolute; top: 4px; right: 3px; display: flex; gap: 7px; }
.vol-title { position: absolute; top: 0; left: 2px; display: flex; align-items: center; gap: 4px; }
.mark { position: absolute; line-height: 14px; white-space: nowrap; }
.high { top: 18px; }
.gap-mark { top: 273px; }
.low { top: 747px; }

.dates { display: flex; height: 15px; border-bottom: 1px solid #b00000; line-height: 15px; color: #ff3232; }
.date-track { position: relative; flex: 1; }
.date { position: absolute; top: 0; }
.month { border-left: 1px solid #b00000; padding-left: 1px; }
.week { position: absolute; top: 0; width: 1px; height: 2px; background: #b00000; }
.date-unit { width: 51px; border-left: 1px solid #b00000; color: #c0c0c0; }
.inds { display: flex; height: 16px; border-bottom: 1px solid #b00000; padding-left: 1px; }
.ind { flex: none; box-sizing: border-box; border-right: 1px solid #b00000; line-height: 16px; overflow: hidden; }
.ind.on { color: #54ffff; }
.ind.gold { color: #c0c000; }
.ind.edge { border-right: 0; border-left: 1px solid #b00000; }
.ind.big-sign { font-size: 14px; }
.w36 { width: 36px; }
.w25 { width: 25px; }

.grid-wrap { display: grid; grid-template-columns: 1fr 14px; height: 240px; }
.stocks { grid-column: 1; width: 100%; border-collapse: collapse; table-layout: fixed; align-self: start; }
.stocks th, .stocks td { height: 22px; padding: 0; text-align: right; line-height: 22px; white-space: nowrap; }
.stocks th { font: 14px/22px "Liberation Mono", "Noto Sans CJK SC", monospace; }
.stocks td { font: 500 14px/22px Roboto, "Noto Sans CJK SC", sans-serif; }
.c-idx { width: 36px; }
.c-name { width: 80px; }
.c-flag { width: 18px; }
.c-pct { width: 50px; }
.stocks .th-name { text-align: left; padding-left: 26px; }
.stocks .th-dot { text-align: left; }
.stocks .idx { padding-right: 15px; }
.stocks .name { text-align: left; color: #f4f48a; font-size: 16px; font-weight: 400; }
.stocks .flag { vertical-align: bottom; text-align: center; color: #ff3232; font-size: 12px; line-height: 14px; }
.sort { color: #ff0000; font-weight: 700; }
.stocks .unit { font-size: 15px; font-weight: 400; }
.scroll { grid-column: 2; grid-row: 1 / 3; display: flex; flex-direction: column; padding-bottom: 2px; }
.thumb { width: 13px; height: 38px; margin-top: 1px; background: #303030; }
.sheet-tabs { grid-column: 1; display: flex; align-self: end; padding: 0 0 1px 3px; }
.sheet { height: 16px; font: 700 13px/16px "Noto Sans CJK SC", sans-serif; color: #fff; background: #c00000; clip-path: polygon(0 0, 100% 0, calc(100% - 6px) 100%, 8px 100%); width: 58px; }
.sheet + .sheet { width: 76px; margin-left: -2px; background: #909090; color: #000; font-weight: 500; }
.foot { display: flex; height: 17px; border-top: 1px solid #b00000; border-bottom: 1px solid #b00000; line-height: 18px; }
.fcell { padding: 0 4px; border-right: 1px solid #b00000; }
.promo { border-right: 0; border-left: 1px solid #b00000; padding: 0 1px; color: #c0c0c0; text-decoration: none; white-space: nowrap; }

.right { flex: none; width: 233px; border-left: 1px solid #b00000; display: flex; flex-direction: column; font-size: 16px; }
.r-title { height: 28px; border-bottom: 1px solid #b00000; display: flex; gap: 5px; padding-left: 35px; line-height: 26px; color: #00e6ff; }
.r-title b { color: #ffff00; font-size: 14px; }
.rows { margin: 0; padding: 1px 3px 0 2px; border-bottom: 1px solid #b00000; }
.rows.five { padding-bottom: 1px; }
.rows div { display: flex; justify-content: space-between; height: 19px; line-height: 19px; }
.rows dt { font-family: "Noto Sans CJK SC", sans-serif; }
.rows dd { margin: 0; font-size: 14px; font-weight: 700; }
.unit { font-size: 16px; font-weight: 400; }
.r-line { display: flex; height: 19px; padding-left: 2px; border-bottom: 1px solid #b00000; line-height: 19px; white-space: nowrap; overflow: hidden; }
.r-line.tall { height: 21px; line-height: 21px; }
.kind { margin-left: 49px; }
.upcount { width: 31px; margin-left: 16px; font-size: 14px; }
.zero { margin-left: auto; padding-right: 2px; font-size: 14px; }
.tick-group + .tick-group { background: repeating-linear-gradient(90deg, #b00000 0 1px, transparent 1px 3px) top / 100% 1px no-repeat; }
.tick-row { display: flex; height: 18px; padding: 0 3px 0 2px; line-height: 18px; font-size: 14px; font-weight: 700; }
.t-time { width: 79px; color: #c8c8c8; }
.t-price { width: 51px; text-align: right; }
.t-amt { flex: 1; text-align: right; }
.r-tabs { display: flex; margin-top: auto; height: 17px; border-top: 1px solid #b00000; border-bottom: 1px solid #b00000; font-size: 12px; }
.r-tabs button { flex: 1; border-right: 1px solid #b00000; line-height: 18px; }
.r-tabs button:last-child { border-right: 0; }
.r-tabs .on { color: #54ffff; font-weight: 700; }

.watermark { position: absolute; top: 12px; right: 15px; color: rgba(96, 96, 96, 0.6); font: 700 34px/48px "Noto Sans CJK SC", sans-serif; }

.palette { position: absolute; top: 267px; right: 5px; width: 92px; height: 360px; background: #fff; display: flex; flex-direction: column; }
.close { align-self: flex-end; width: 19px; height: 19px; margin: 7px 1px 3px 0; background: #c75050; color: #fff; font-weight: 700; line-height: 17px; }
.tool-grid { display: grid; grid-template-columns: repeat(4, 23px); grid-auto-rows: 22px; }
.tool { display: flex; justify-content: flex-start; align-items: center; }
.tool.pressed { background: #f0f0f0; }
.tool svg { font-family: "Liberation Sans", "Noto Sans CJK SC", sans-serif; }

.gauge { position: absolute; right: 55px; bottom: 48px; display: flex; align-items: center; }
.rates { width: 82px; height: 42px; margin-right: -22px; border-radius: 21px 0 0 21px; background: rgba(32, 36, 46, 0.88); color: #999; }
.rate { display: flex; align-items: center; height: 20px; padding-left: 10px; font-size: 11px; }
.rate + .rate { border-top: 1px solid #343946; }
.rate b { margin-left: 5px; color: #ddd; font-size: 12px; }
.dial { position: relative; width: 58px; height: 58px; border-radius: 50%; background: #2a2e3e; display: flex; align-items: center; justify-content: center; color: #ddd; }
.dial svg { position: absolute; top: 0; left: 0; }
.big { font: 300 24px/58px Roboto, sans-serif; }
.small { padding-top: 8px; }

.beads { position: absolute; left: 703px; bottom: 48px; display: flex; gap: 2px; }
.beads i { width: 30px; height: 30px; border-radius: 50%; background: linear-gradient(#9ed4dc, #fff 45%, #e8fcff 60%, #00e8ff); }
.lyric { position: absolute; left: 703px; bottom: -14px; font: 700 32px/40px "Noto Sans CJK SC", sans-serif; background: linear-gradient(#0058a8 20%, #1296d8 60%, #22b8f0); background-clip: text; color: transparent; }
.ime { position: absolute; right: 4px; bottom: 0; width: 174px; height: 14px; display: flex; align-items: flex-end; }
.ime svg { position: relative; flex: none; z-index: 1; height: 11px; }
.ime-bar { flex: 1; height: 6px; margin-left: -32px; padding-left: 38px; display: flex; align-items: flex-end; justify-content: space-around; background: #fff; border-radius: 4px 4px 0 0; }
.ime-bar i { width: 10px; height: 2px; background: #1b80d8; }
</style>
